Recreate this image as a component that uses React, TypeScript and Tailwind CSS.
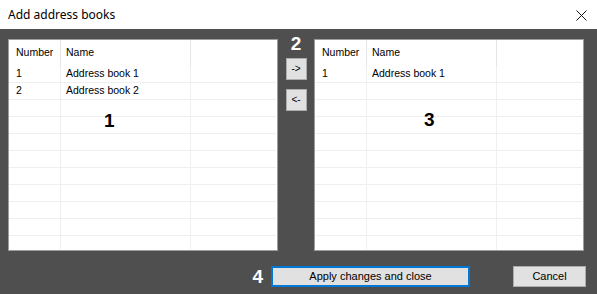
import React from "react"

type Row = { num: string; name: string }

const leftRows: Row[] = [
  { num: "1", name: "Address book 1" },
  { num: "2", name: "Address book 2" },
]

const rightRows: Row[] = [{ num: "1", name: "Address book 1" }]

const ROW_COUNT = 11

function BookTable({ rows, label, labelPos }: { rows: Row[]; label: string; labelPos: string }) {
  const filled = Array.from({ length: ROW_COUNT }, (_, i) => rows[i] ?? { num: "", name: "" })

  return (
    <div className="relative w-[270px] h-[212px] bg-white border border-[#9d9d9d] overflow-hidden text-[10.5px] text-black">
      {/* header */}
      <div className="grid grid-cols-[52px_130px_1fr] h-[26px]">
        <div className="flex items-center pl-[7px] border-r border-[#e5e5e5]">Number</div>
        <div className="flex items-center pl-[5px] border-r border-[#e5e5e5]">Name</div>
        <div />
      </div>

      {/* rows */}
      {filled.map((r, i) => (
        <div key={i} className="grid grid-cols-[52px_130px_1fr] h-[17px] border-b border-[#efefef] mr-[1px]">
          <div className="flex items-center pl-[7px] border-r border-[#efefef]">{r.num}</div>
          <div className="flex items-center pl-[5px] border-r border-[#efefef]">{r.name}</div>
          <div />
        </div>
      ))}

      {/* big step number */}
      <span className={`absolute ${labelPos} text-[19px] leading-[19px] font-bold`}>{label}</span>
    </div>
  )
}

function SmallButton({ children }: { children: React.ReactNode }) {
  return (
    <button className="w-[21px] h-[22px] bg-[#e1e1e1] border border-[#adadad] text-[10px] leading-none text-black flex items-center justify-center">
      {children}
    </button>
  )
}

export default function App() {
  return (
    <div
      className="w-[597px] h-[294px] flex flex-col overflow-hidden"
      style={{ fontFamily: '"Liberation Sans", Arial, sans-serif' }}
    >
      {/* Title bar */}
      <div className="h-[29px] bg-white flex items-center justify-between pl-[8px] pr-[10px]">
        <span className="text-[12px] text-black" style={{ fontFamily: '"Noto Sans", "Liberation Sans", sans-serif' }}>
          Add address books
        </span>
        <svg width="11" height="11" viewBox="0 0 11 11" className="mt-[1px]">
          <path d="M0.5 0.5 L10.5 10.5 M10.5 0.5 L0.5 10.5" stroke="#111" strokeWidth="1" />
        </svg>
      </div>

      {/* Body */}
      <div className="flex-1 bg-[#4f4f4f] pt-[10px] pl-[8px] pr-[11px] flex flex-col">
        <div className="flex">
          <BookTable rows={leftRows} label="1" labelPos="left-[95px] top-[71px]" />

          <div className="w-[36px] flex flex-col items-center">
            <span className="text-[19px] leading-[19px] font-bold text-white -mt-[5px]">2</span>
            <div className="mt-[5px]">
              <SmallButton>-&gt;</SmallButton>
            </div>
            <div className="mt-[9px]">
              <SmallButton>&lt;-</SmallButton>
            </div>
          </div>

          <BookTable rows={rightRows} label="3" labelPos="left-[109px] top-[70px]" />
        </div>

        <div className="flex items-center justify-end mt-[15px]">
          <span className="text-[19px] leading-[19px] font-bold text-white mr-[8px]">4</span>
          <button className="w-[199px] h-[21px] bg-[#e1e1e1] border-2 border-[#0078d7] text-[11px] text-black flex items-center justify-center">
            Apply changes and close
          </button>
          <button className="ml-[43px] w-[73px] h-[21px] bg-[#e1e1e1] border border-[#adadad] text-[11px] text-black flex items-center justify-center">
            Cancel
          </button>
        </div>
      </div>
    </div>
  )
}
